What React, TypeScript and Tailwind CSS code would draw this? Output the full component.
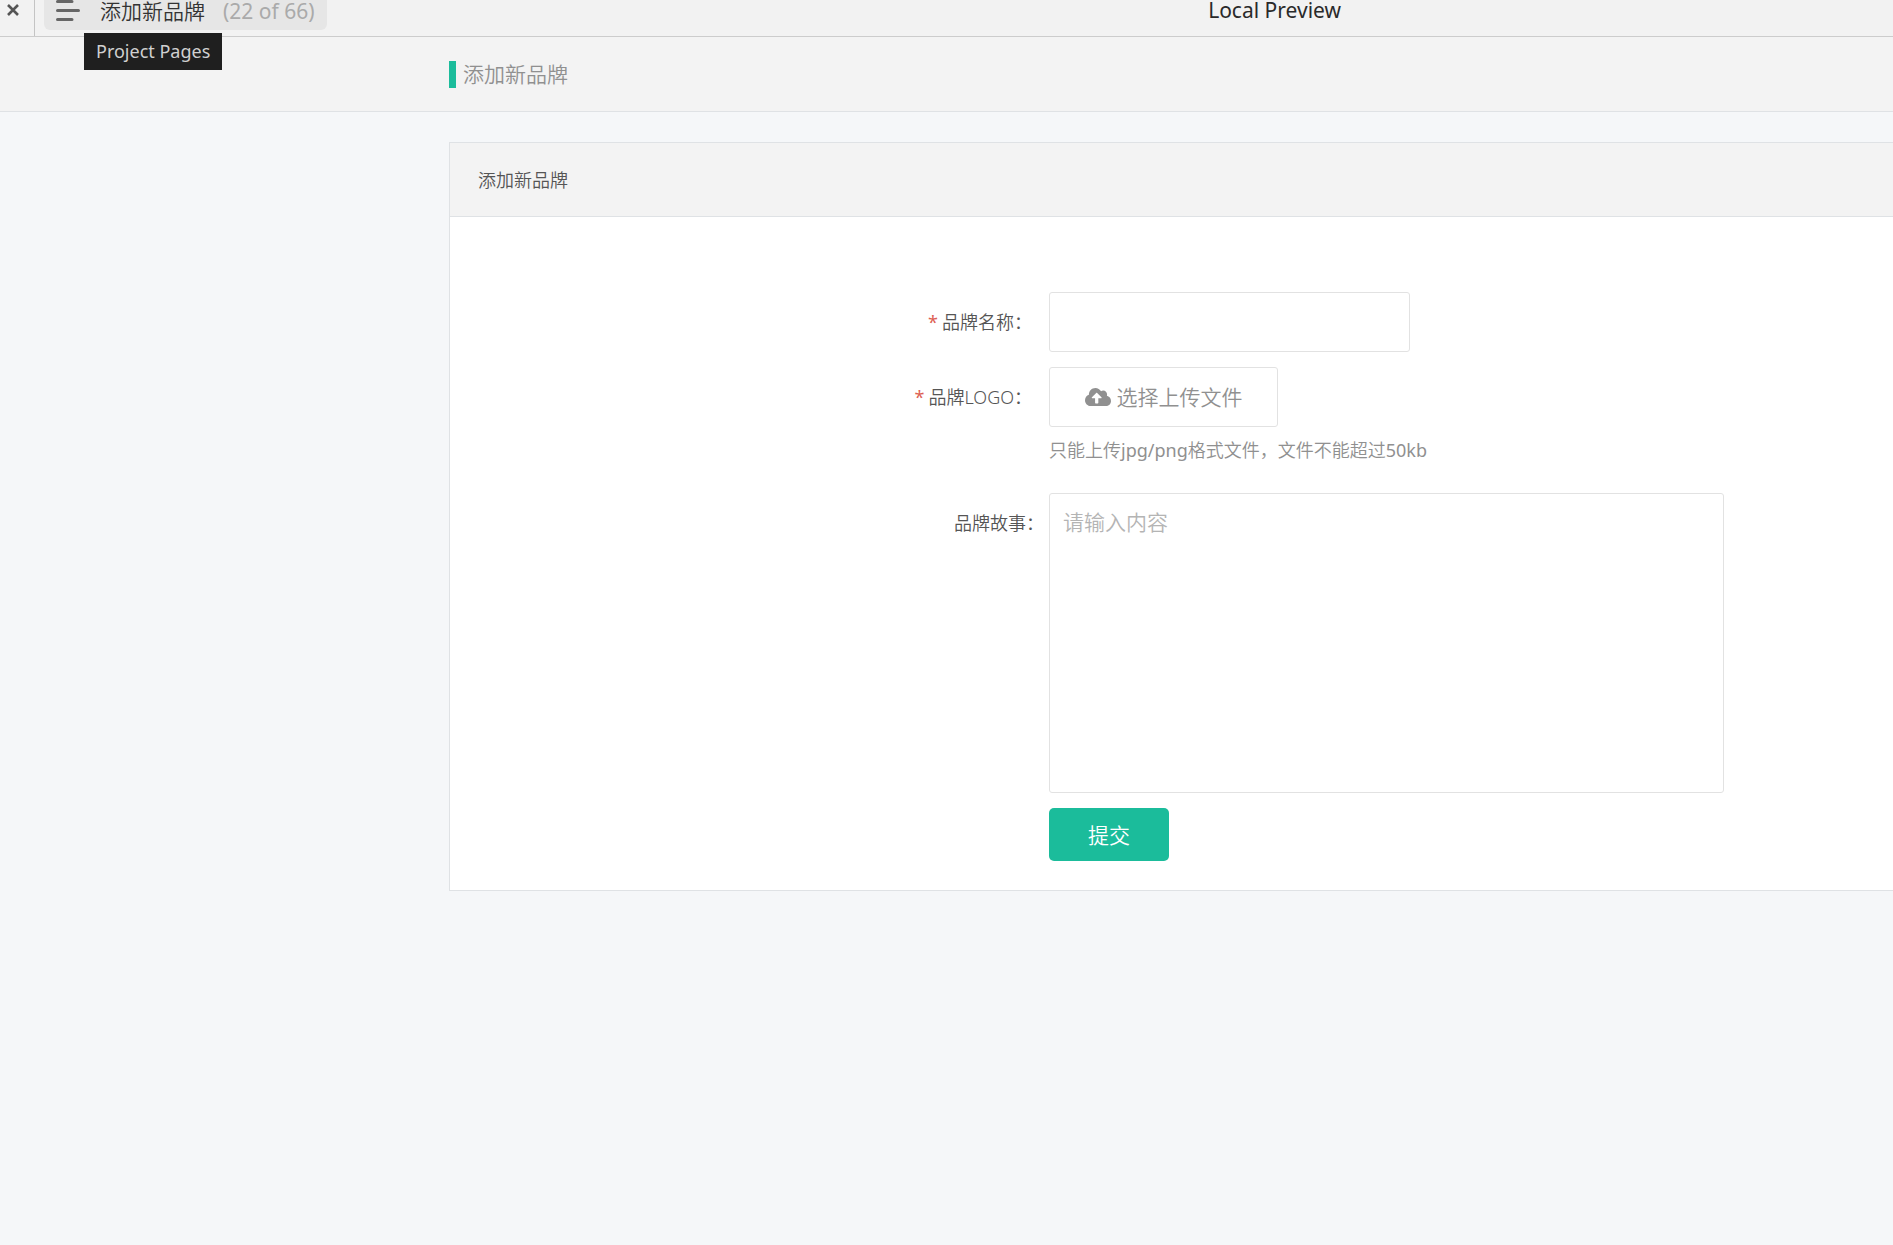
import { ReactNode } from 'react';
import { FaCloudUploadAlt } from 'react-icons/fa';

interface FormRowProps {
  label: string;
  htmlFor: string;
  required?: boolean;
  children: ReactNode;
}

function FormRow({ label, htmlFor, required, children }: FormRowProps) {
  return (
    <div className="flex">
      <div className={`w-[599px] shrink-0 text-right leading-[60px] ${required ? 'pr-[17px]' : 'pr-[5px]'}`}>
        {required && <span className="mr-1 font-normal text-[#dd5f53]">*</span>}
        <label htmlFor={htmlFor}>{label}</label>
      </div>
      {children}
    </div>
  );
}

function PreviewBar() {
  return (
    <header className="flex h-[37px] border-b border-[#cccccc] bg-[#f2f2f2]">
      <button type="button" aria-label="Close" className="flex w-[35px] shrink-0 justify-center border-r border-[#c4c4c4] pr-2">
        <svg className="mt-1 h-3 w-3" viewBox="0 0 12 12" fill="none" stroke="#555" strokeWidth="2.6">
          <path d="M1 1L11 11M11 1L1 11" />
        </svg>
      </button>
      <div className="relative ml-[9px]">
        <button
          type="button"
          aria-describedby="pages-tip"
          className="flex h-[30px] items-start rounded-b-md bg-[#e6e6e6] pr-3 pl-3 text-[21px] leading-[22px] text-[#333]"
        >
          <svg className="h-[22px] w-6" viewBox="0 0 24 22" stroke="#666" strokeWidth="3" strokeLinecap="round">
            <path d="M1.5 1.5H16M1.5 10.5H22.5M1.5 19.5H16" />
          </svg>
          <span className="ml-5">添加新品牌</span>
          <span className="ml-[18px] font-normal text-[#aaa]">(22 of 66)</span>
        </button>
        <div
          id="pages-tip"
          role="tooltip"
          className="absolute top-[33px] left-10 h-[37px] bg-[#1f1f1f] px-3 text-[18px] leading-9 font-normal whitespace-nowrap text-[#d0d0d0]"
        >
          Project Pages
        </div>
      </div>
      <h1 className="ml-auto pr-[552px] text-[21px] leading-5 font-normal text-[#2a2a2a]">Local Preview</h1>
    </header>
  );
}

function BrandForm() {
  return (
    <form className="flex flex-col gap-[15px] pt-[75px] pb-[29px]" onSubmit={(e) => e.preventDefault()}>
      <FormRow label="品牌名称：" htmlFor="brand-name" required>
        <input
          id="brand-name"
          type="text"
          className="h-[60px] w-[361px] rounded-[3px] border border-[#e2e2e2] bg-white px-3 text-[21px] outline-none"
        />
      </FormRow>

      <FormRow label="品牌LOGO：" htmlFor="brand-logo" required>
        <div>
          <button
            id="brand-logo"
            type="button"
            className="flex h-[60px] w-[229px] items-center justify-center gap-[6px] rounded-[3px] border border-[#e2e2e2] bg-white text-[21px] text-[#909090]"
          >
            <FaCloudUploadAlt className="h-[26px] w-[26px]" />
            <span className="pt-[2px]">选择上传文件</span>
          </button>
          <p className="mt-2 leading-[30px] text-[#909090]">
            只能上传<span className="font-normal">jpg/png</span>格式文件，文件不能超过<span className="font-normal">50kb</span>
          </p>
        </div>
      </FormRow>

      <div className="mt-[13px]">
        <FormRow label="品牌故事：" htmlFor="brand-story">
          <textarea
            id="brand-story"
            placeholder="请输入内容"
            className="h-[300px] w-[675px] resize-none rounded-[3px] border border-[#e2e2e2] bg-white px-[13px] py-3 text-[21px] leading-8 outline-none placeholder:text-[#b4b4b4]"
          />
        </FormRow>
      </div>

      <button type="submit" className="ml-[599px] h-[53px] w-[120px] rounded-[5px] bg-[#1bbc9b] pt-[2px] text-[21px] text-white">
        提交
      </button>
    </form>
  );
}

function App() {
  return (
    <div
      lang="zh-CN"
      className="min-h-screen overflow-hidden bg-[#f5f7f9] font-['Noto_Sans','Noto_Sans_CJK_SC',sans-serif] text-[18px] font-[350] text-[#555]"
    >
      <PreviewBar />
      <div className="flex h-[75px] items-center border-b border-[#dfe2e5] bg-[#f3f3f3] pl-[449px]">
        <span className="mr-[7px] h-[27px] w-[7px] bg-[#1bbc9b]" />
        <h2 className="pt-[2px] text-[21px] font-[350] text-[#909090]">添加新品牌</h2>
      </div>
      <main className="mt-[30px] ml-[449px] border-y border-l border-[#dfe2e5] bg-white">
        <h3 className="h-[74px] border-b border-[#dfe2e5] bg-[#f3f3f3] pl-7 leading-[74px]">添加新品牌</h3>
        <BrandForm />
      </main>
    </div>
  );
}

export default App;
